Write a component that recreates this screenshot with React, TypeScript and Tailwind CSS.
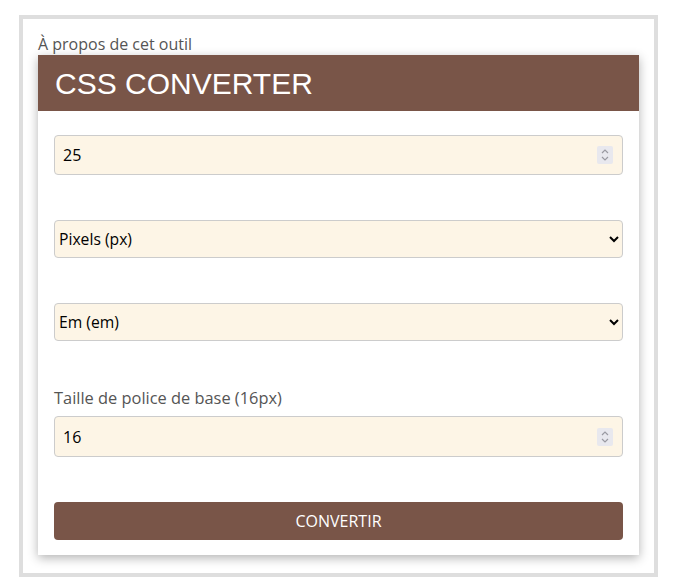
import React from "react";

const OS = '"Open Sans", sans-serif';

function Spin() {
  return (
    <span className="pointer-events-none absolute right-[10px] top-1/2 -translate-y-1/2 flex h-[18px] w-[16px] items-center justify-center rounded-[2px] bg-[#e8e8ee]">
      <svg width="10" height="14" viewBox="0 0 10 14" fill="none" stroke="#9a9aa2" strokeWidth="1.2">
        <path d="M2 5 L5 2 L8 5" />
        <path d="M2 9 L5 12 L8 9" />
      </svg>
    </span>
  );
}

function NumInput({ value, h }: { value: number; h: string }) {
  return (
    <div className="relative">
      <input
        type="number"
        defaultValue={value}
        className={`${h} w-full rounded-[4px] border border-[#ccc] bg-[#fdf5e6] px-2 text-[16px] text-black [appearance:textfield] [&::-webkit-inner-spin-button]:appearance-none [&::-webkit-outer-spin-button]:appearance-none`}
        style={{ fontFamily: OS }}
      />
      <Spin />
    </div>
  );
}

export default function App() {
  return (
    <div className="min-h-[587px] w-[673px] bg-white pt-[15px] pl-[19px]" style={{ fontFamily: OS }}>
      <div className="w-[639px] h-[562px] border-4 border-[#dedede] bg-white p-[15px]">
        <div className="text-[16px] leading-[21px] text-[#555]">À propos de cet outil</div>
        <div className="bg-white shadow-[0_3px_10px_rgba(0,0,0,0.3)]">
          <div className="h-[56px] bg-[#795548] flex items-center pl-[17px] pt-[2px]">
            <h1 className="text-[30px] leading-none text-white" style={{ fontFamily: '"Liberation Sans", Arial, sans-serif' }}>
              CSS CONVERTER
            </h1>
          </div>
          <div className="flex flex-col px-4 pt-[24px] pb-[15px]">
            <NumInput value={25} h="h-[40px]" />
            <select
              defaultValue="px"
              className="mt-[45px] h-[38px] w-full rounded-[4px] border border-[#ccc] bg-[#fdf5e6] p-0 text-[15.7px] text-black"
              style={{ fontFamily: OS }}
            >
              <option value="px">Pixels (px)</option>
              <option value="em">Em (em)</option>
            </select>
            <select
              defaultValue="em"
              className="mt-[45px] h-[38px] w-full rounded-[4px] border border-[#ccc] bg-[#fdf5e6] p-0 text-[15.7px] text-black"
              style={{ fontFamily: OS }}
            >
              <option value="px">Pixels (px)</option>
              <option value="em">Em (em)</option>
            </select>
            <label className="mt-[47px] mb-[8px] h-[20px] text-[16.4px] leading-[20px] text-[#555]">
              Taille de police de base (16px)
            </label>
            <NumInput value={16} h="h-[41px]" />
            <button className="mt-[45px] h-[38px] w-full rounded-[4px] bg-[#795548] text-[16px] text-white" style={{ fontFamily: OS }}>
              CONVERTIR
            </button>
          </div>
        </div>
      </div>
    </div>
  );
}
